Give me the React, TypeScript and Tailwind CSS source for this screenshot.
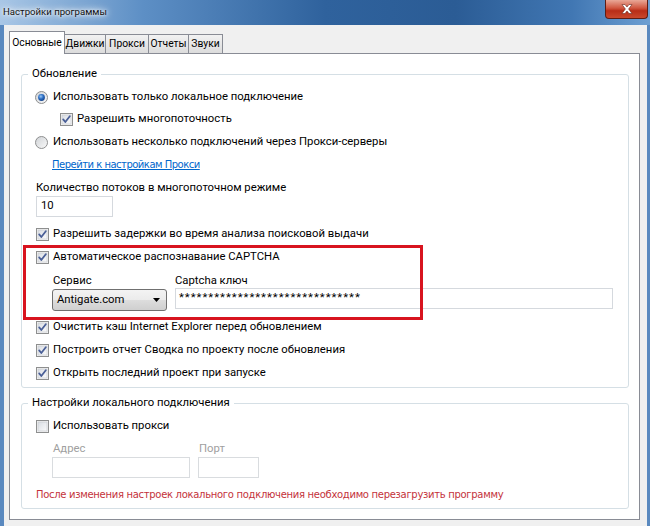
import React from "react";

const SANS = "font-['Roboto','Noto_Sans',sans-serif]";
const SMALL = "font-['DejaVu_Sans',sans-serif] text-[10px]";

function CheckBox({ checked = true }: { checked?: boolean }) {
  return (
    <svg width="13" height="13" viewBox="0 0 13 13" className="shrink-0">
      <defs>
        <linearGradient id="cbg" x1="0" y1="0" x2="1" y2="1">
          <stop offset="0" stopColor="#d9dde3" />
          <stop offset="1" stopColor="#fbfbfb" />
        </linearGradient>
      </defs>
      <rect x="0.5" y="0.5" width="12" height="12" fill="#f4f4f4" stroke="#8e8f8f" />
      <rect x="2" y="2" width="9" height="9" fill="url(#cbg)" stroke="#c3c6cb" strokeWidth="0.6" />
      {checked && (
        <path d="M3.2 6.4 L5.3 9 L9.8 3.2" fill="none" stroke="#4a5f97" strokeWidth="1.8" strokeLinecap="round" strokeLinejoin="round" />
      )}
    </svg>
  );
}

function Radio({ checked }: { checked?: boolean }) {
  return (
    <svg width="13" height="13" viewBox="0 0 13 13" className="shrink-0">
      <defs>
        <radialGradient id="rdot" cx="0.4" cy="0.35" r="0.7">
          <stop offset="0" stopColor="#9cc8f5" />
          <stop offset="0.5" stopColor="#2c6fc4" />
          <stop offset="1" stopColor="#133e86" />
        </radialGradient>
        <linearGradient id="rbg" x1="0" y1="0" x2="1" y2="1">
          <stop offset="0" stopColor="#cfd2d6" />
          <stop offset="1" stopColor="#fafafa" />
        </linearGradient>
      </defs>
      <circle cx="6.5" cy="6.5" r="6" fill="url(#rbg)" stroke="#8e8f8f" />
      {checked && <circle cx="6.5" cy="6.5" r="3.4" fill="url(#rdot)" />}
    </svg>
  );
}

function Row({ children, className = "" }: { children: React.ReactNode; className?: string }) {
  return <div className={`flex h-[20px] items-center gap-[4px] ${className}`}>{children}</div>;
}

const TABS: [string, string][] = [
  ["Движки", "w-[41px]"],
  ["Прокси", "w-[43px]"],
  ["Отчеты", "w-[40px]"],
  ["Звуки", "w-[34px]"],
];

export default function App() {
  return (
    <div className={`relative h-[526px] w-[650px] overflow-hidden bg-[#5a89bf] text-[11.3px] text-black ${SANS}`}>
      {/* title bar */}
      <div className="relative h-[25px] bg-[linear-gradient(90deg,#a9c7e6_0%,#5d8fc5_22%,#2f629d_50%,#2b5c95_70%,#4177b3_88%,#6d9fd2_100%)]">
        <div className="absolute left-[3px] top-[5px] text-[9.6px] text-[#111] [text-shadow:0_0_6px_#fff,0_0_10px_#fff,0_0_3px_#fff]">
          Настройки программы
        </div>
        <div className="absolute right-[2px] top-0 flex h-[19px] w-[43px] items-center justify-center rounded-b-[4px] border border-t-0 border-[#5e1d14] bg-[linear-gradient(180deg,#e9a897_0%,#d0563f_45%,#b82d17_60%,#c9482c_100%)]">
          <svg width="12" height="10" viewBox="0 0 12 10">
            <path d="M1 0.5 L4 0.5 L6 3 L8 0.5 L11 0.5 L7.6 5 L11 9.5 L8 9.5 L6 7 L4 9.5 L1 9.5 L4.4 5 Z" fill="#fff" stroke="#6a2a20" strokeWidth="0.6" />
          </svg>
        </div>
      </div>

      {/* client area */}
      <div className="ml-[4px] mr-[3px] h-[501px] bg-[#f0f0f0] pl-[5px] pr-[7px] pt-[6px]">
        {/* tabs */}
        <div className="relative z-10 flex h-[22px] items-end text-[10.3px]">
          <div className="-mb-[1px] flex h-[23px] w-[56px] items-center justify-center border border-b-0 border-[#898c95] bg-white pb-[1px]">
            Основные
          </div>
          {TABS.map(([t, w]) => (
            <div
              key={t}
              className={`flex h-[19px] ${w} items-center justify-center border border-b-0 border-l-0 border-[#898c95] bg-[linear-gradient(180deg,#f2f2f2,#dcdcdc)]`}
            >
              {t}
            </div>
          ))}
        </div>

        {/* panel */}
        <div className="h-[467px] border border-[#898c95] bg-white pl-[11px] pr-[10px] pt-[12px]">
          <fieldset className="rounded-[3px] border border-[#d5dfe5] pb-[4px] pl-[14px]">
            <legend className="-ml-[8px] h-[16px] px-[4px] leading-[16px]">Обновление</legend>
            <Row className="mt-[5px] -ml-[1px]">
              <Radio checked />
              <span className="ml-[1px]">Использовать только локальное подключение</span>
            </Row>
            <Row className="ml-[24px] mt-[2px]">
              <CheckBox />
              <span>Разрешить многопоточность</span>
            </Row>
            <Row className="mt-[3px] -ml-[1px]">
              <Radio />
              <span className="ml-[1px]">Использовать несколько подключений через Прокси-серверы</span>
            </Row>
            <Row className="ml-[16px] mt-[2px]">
              <span className={`${SMALL} tracking-[-0.5px] text-[#0066cc] underline`}>Перейти к настройкам Прокси</span>
            </Row>
            <div className="mt-[6px] flex h-[16px] items-center">Количество потоков в многопоточном режиме</div>
            <div className="flex h-[21px] w-[77px] items-center border border-[#d5d9de] bg-white px-[4px]">10</div>
            <Row className="mt-[7px]">
              <CheckBox />
              <span>Разрешить задержки во время анализа поисковой выдачи</span>
            </Row>
            <Row className="mt-[3px]">
              <CheckBox />
              <span>Автоматическое распознавание CAPTCHA</span>
            </Row>
            <div className="ml-[17px] mt-[6px] flex h-[16px] items-center">
              <span className="w-[122px]">Сервис</span>
              <span>Captcha ключ</span>
            </div>
            <div className="ml-[16px] flex items-start gap-[8px]">
              <div className="flex h-[22px] w-[115px] items-center justify-between rounded-[3px] border border-[#707070] bg-[linear-gradient(180deg,#f3f3f3_0%,#ebebeb_50%,#dddddd_51%,#cfcfcf_100%)] pl-[4px] pr-[6px]">
                <span>Antigate.com</span>
                <svg width="7" height="4" viewBox="0 0 7 4">
                  <path d="M0 0 L7 0 L3.5 4 Z" fill="#000" />
                </svg>
              </div>
              <div className="-mt-[1px] flex h-[21px] w-[438px] items-center border border-[#d5d9de] bg-white px-[3px] tracking-[1px]">
                {"*".repeat(31)}
              </div>
            </div>
            <Row className="mt-[6px]">
              <CheckBox />
              <span>Очистить кэш Internet Explorer перед обновлением</span>
            </Row>
            <Row className="mt-[3px]">
              <CheckBox />
              <span>Построить отчет Сводка по проекту после обновления</span>
            </Row>
            <Row className="mt-[3px]">
              <CheckBox />
              <span>Открыть последний проект при запуске</span>
            </Row>
          </fieldset>

          <fieldset className="mt-[7px] rounded-[3px] border border-[#d5dfe5] pb-[6px] pl-[14px]">
            <legend className="-ml-[8px] h-[16px] px-[4px] leading-[16px]">Настройки локального подключения</legend>
            <Row className="mt-[5px]">
              <CheckBox checked={false} />
              <span>Использовать прокси</span>
            </Row>
            <div className="ml-[17px] mt-[5px] flex h-[16px] items-center text-[#a0a0a0]">
              <span className="w-[146px]">Адрес</span>
              <span>Порт</span>
            </div>
            <div className="ml-[16px] flex gap-[8px]">
              <div className="h-[21px] w-[138px] border border-[#d9dcdf] bg-white" />
              <div className="h-[21px] w-[61px] border border-[#d9dcdf] bg-white" />
            </div>
            <div className={`mt-[8px] flex h-[16px] items-center ${SMALL} tracking-[-0.3px] text-[#c4323a]`}>
              После изменения настроек локального подключения необходимо перезагрузить программу
            </div>
          </fieldset>
        </div>
      </div>

      {/* annotation highlight */}
      <div className="pointer-events-none absolute left-[23px] top-[245px] h-[75px] w-[400px] border-[3px] border-[#d8141f]" />
    </div>
  );
}
